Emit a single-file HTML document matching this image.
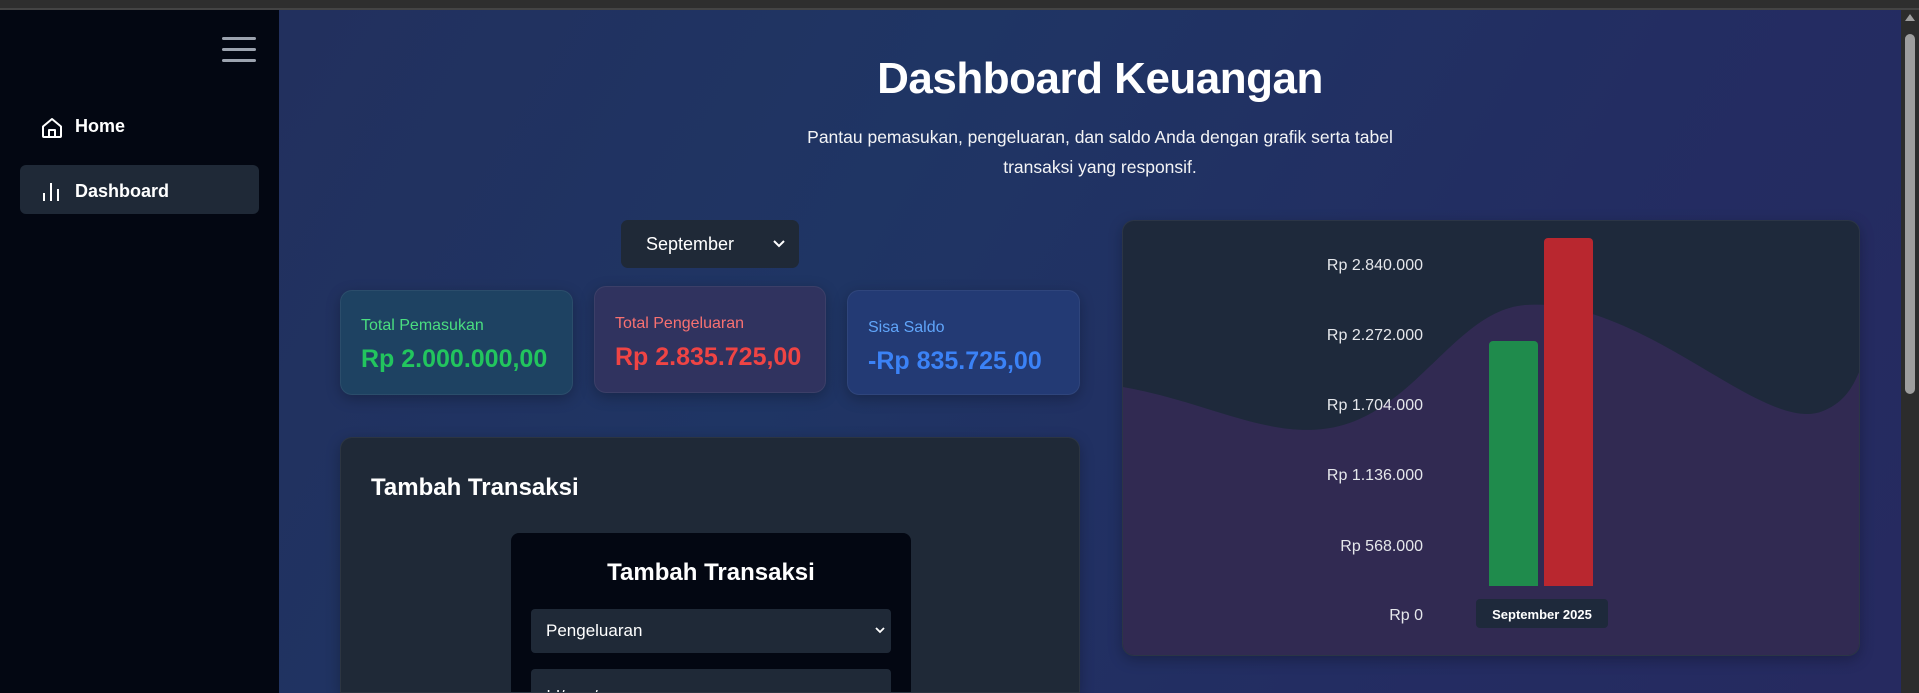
<!DOCTYPE html>
<html><head><meta charset="utf-8"><style>
*{box-sizing:border-box;margin:0;padding:0}
html{width:1919px;height:693px;overflow:hidden}
body{width:1919px;height:693px;overflow:hidden;font-family:"Liberation Sans",sans-serif;background:#2b2b2b;position:relative;color:#fff}
.a{position:absolute}
#top{left:0;top:0;width:1919px;height:10px;background:#2e2e2e;border-bottom:2px solid #444}
#side{left:0;top:10px;width:279px;height:683px;background:#030712}
#main{left:279px;top:10px;width:1622px;height:683px;overflow:hidden;background:linear-gradient(120deg,#22305e 0%,#1f3564 35%,#232d62 70%,#262a60 100%)}
#sb{left:1901px;top:10px;width:18px;height:683px;background:#2c2c2c}
.card{border-radius:12px;box-shadow:0 4px 14px rgba(0,0,0,.25);border:1px solid rgba(255,255,255,.06)}
.lbl{font-size:16px}
.val{font-size:25px;font-weight:bold}
.yl{width:200px;text-align:right;font-size:16px;color:#e5e7eb}
</style></head><body>
<div class="a" id="top"></div>
<div class="a" id="side">
  <div class="a" style="left:222px;top:27px;width:34px;height:3px;background:#9ca3af;border-radius:2px"></div>
  <div class="a" style="left:222px;top:38px;width:34px;height:3px;background:#9ca3af;border-radius:2px"></div>
  <div class="a" style="left:222px;top:49px;width:34px;height:3px;background:#9ca3af;border-radius:2px"></div>
  <svg class="a" style="left:40px;top:106px" width="24" height="24" viewBox="0 0 24 24" fill="none" stroke="#fff" stroke-width="2" stroke-linejoin="round"><path d="M3 10.5L12 3l9 7.5V20a1 1 0 0 1-1 1H4a1 1 0 0 1-1-1z"/><path d="M9 21v-7h6v7"/></svg>
  <div class="a" style="left:75px;top:106px;font-size:18px;font-weight:bold">Home</div>
  <div class="a" style="left:20px;top:155px;width:239px;height:49px;background:#1f2937;border-radius:6px"></div>
  <svg class="a" style="left:40px;top:171px" width="24" height="22" viewBox="0 0 24 22" stroke="#fff" stroke-width="2"><path d="M4 20v-8M11 20V2M18 20v-12"/></svg>
  <div class="a" style="left:75px;top:171px;font-size:18px;font-weight:bold">Dashboard</div>
</div>
<div class="a" id="main">
  <div class="a" style="left:0;width:1642px;top:44px;text-align:center;font-size:44px;font-weight:bold;letter-spacing:-0.5px">Dashboard Keuangan</div>
  <div class="a" style="left:491px;width:660px;top:112px;text-align:center;font-size:17.5px;line-height:30px;color:#f3f4f6">Pantau pemasukan, pengeluaran, dan saldo Anda dengan grafik serta tabel transaksi yang responsif.</div>
  <div class="a" style="left:342px;top:210px;width:178px;height:48px;background:#1f2937;border-radius:7px;font-size:18px;padding:14px 0 0 25px">September<svg class="a" style="right:14px;top:20px" width="12" height="8" viewBox="0 0 12 8" fill="none" stroke="#fff" stroke-width="2"><path d="M1 1l5 5 5-5"/></svg></div>
  <div class="a card" style="left:61px;top:280px;width:233px;height:105px;background:#1e4262">
    <div class="a lbl" style="left:20px;top:26px;color:#4ade80">Total Pemasukan</div>
    <div class="a val" style="left:20px;top:54px;color:#22c55e">Rp 2.000.000,00</div></div>
  <div class="a card" style="left:315px;top:276px;width:232px;height:107px;background:#30335f">
    <div class="a lbl" style="left:20px;top:28px;color:#f87171">Total Pengeluaran</div>
    <div class="a val" style="left:20px;top:56px;color:#ef4444">Rp 2.835.725,00</div></div>
  <div class="a card" style="left:568px;top:280px;width:233px;height:105px;background:#233a74">
    <div class="a lbl" style="left:20px;top:28px;color:#60a5fa">Sisa Saldo</div>
    <div class="a val" style="left:20px;top:56px;color:#3b82f6">-Rp 835.725,00</div></div>
  <div class="a card" style="left:61px;top:427px;width:740px;height:256px;background:#1f2937;overflow:hidden;border-radius:12px 12px 0 0">
    <div class="a" style="left:30px;top:36px;font-size:24px;font-weight:bold">Tambah Transaksi</div>
    <div class="a" style="left:170px;top:95px;width:400px;height:161px;background:#030712;border-radius:8px 8px 0 0;overflow:hidden">
      <div class="a" style="left:0;width:400px;top:26px;text-align:center;font-size:24px;font-weight:bold">Tambah Transaksi</div>
      <div class="a" style="left:20px;top:76px;width:360px;height:44px;background:#1f2937;border-radius:4px;font-size:17px;padding:12px 0 0 15px">Pengeluaran<svg class="a" style="right:6px;top:18px" width="10" height="7" viewBox="0 0 10 7" fill="none" stroke="#fff" stroke-width="1.8"><path d="M1 1l4 4 4-4"/></svg></div>
      <div class="a" style="left:20px;top:136px;width:360px;height:44px;background:#1f2937;border-radius:4px;font-size:17px;padding:18px 0 0 10px">dd/mm/yyyy</div>
    </div>
  </div>
  <div class="a card" style="left:843px;top:210px;width:738px;height:436px;background:#1e293b;overflow:hidden">
    <svg class="a" style="left:0;top:0" width="738" height="436"><path d="M0 166 C80 180 140 215 200 208 C290 198 330 90 402 84 C520 75 640 215 700 190 C725 180 732 160 738 147 L738 436 L0 436Z" fill="#312a52"/>
    <rect x="366" y="120" width="49" height="245" rx="4" fill="#1f8b4c"/>
    <rect x="366" y="355" width="49" height="10" fill="#1f8b4c"/>
    <rect x="421" y="17" width="49" height="348" rx="4" fill="#b9272f"/>
    <rect x="421" y="355" width="49" height="10" fill="#b9272f"/>
    <rect x="353" y="378" width="132" height="29" rx="4" fill="#1e293b"/>
    <text x="419" y="398" text-anchor="middle" font-family="Liberation Sans" font-size="13" font-weight="bold" fill="#fff">September 2025</text>
    </svg>
    <div class="a yl" style="left:100px;top:36px">Rp 2.840.000</div>
    <div class="a yl" style="left:100px;top:106px">Rp 2.272.000</div>
    <div class="a yl" style="left:100px;top:176px">Rp 1.704.000</div>
    <div class="a yl" style="left:100px;top:246px">Rp 1.136.000</div>
    <div class="a yl" style="left:100px;top:317px">Rp 568.000</div>
    <div class="a yl" style="left:100px;top:386px">Rp 0</div>
  </div>
</div>
<div class="a" id="sb"><div class="a" style="left:4px;top:24px;width:10px;height:360px;background:#9e9e9e;border-radius:5px"></div><div class="a" style="left:4px;top:4px;width:0;height:0;border-left:5px solid transparent;border-right:5px solid transparent;border-bottom:7px solid #9e9e9e"></div></div>
</body></html>
